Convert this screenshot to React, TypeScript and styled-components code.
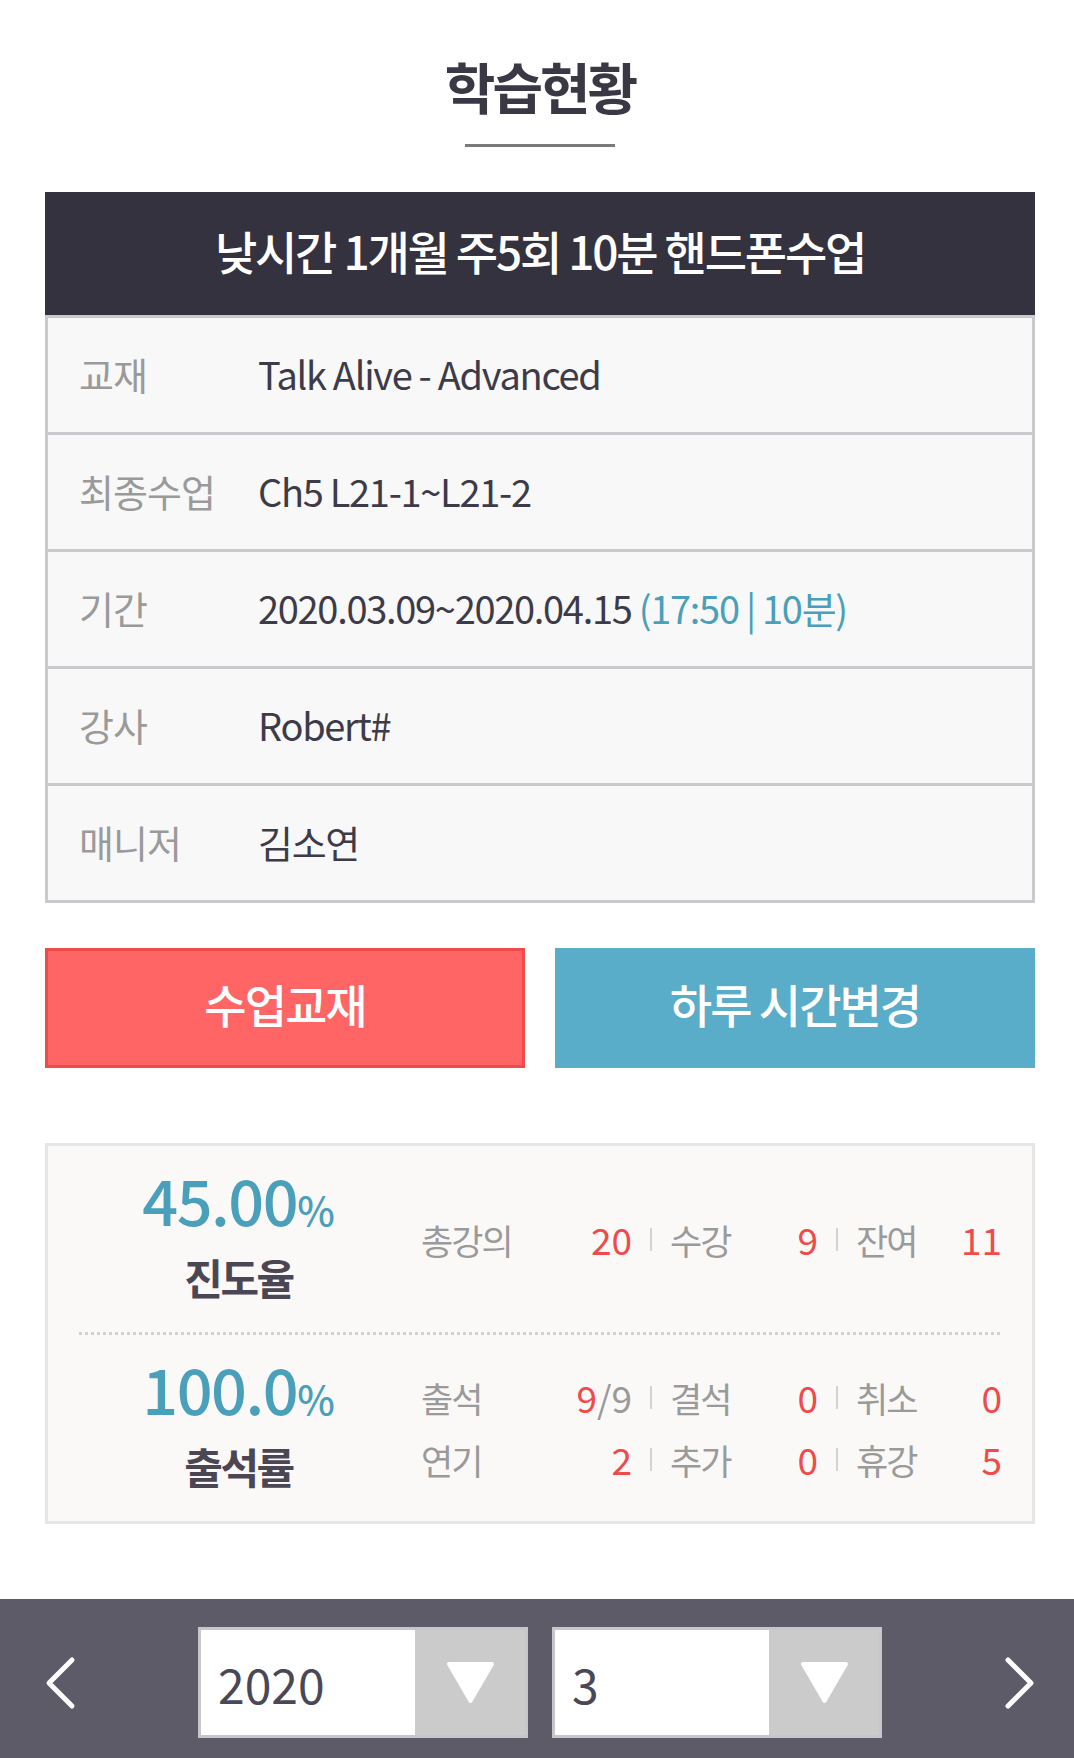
import React from 'react';
import styled, { createGlobalStyle } from 'styled-components';

const GlobalStyle = createGlobalStyle`
  html, body {
    margin: 0;
    padding: 0;
    background: #ffffff;
  }
  body {
    font-family: "Noto Sans CJK KR", "Noto Sans", sans-serif;
    color: #3d3b48;
  }
  * {
    box-sizing: border-box;
  }
`;

const Page = styled.div`
  width: 1074px;
  min-height: 1758px;
  display: flex;
  flex-direction: column;
`;

const Content = styled.main`
  padding: 0 39px 0 45px;
  display: flex;
  flex-direction: column;
`;

const TitleWrap = styled.header`
  padding-top: 54px;
  display: flex;
  flex-direction: column;
  align-items: center;
`;

const Title = styled.h1`
  margin: 0;
  font-size: 55px;
  line-height: 62px;
  font-weight: 700;
  letter-spacing: -3px;
  color: #3a3845;
`;

const TitleBar = styled.span`
  display: block;
  width: 150px;
  height: 3px;
  margin-top: 28px;
  background: #7a7a7a;
`;

const CourseHead = styled.div`
  margin-top: 45px;
  height: 123px;
  padding-bottom: 8px;
  background: #34323f;
  color: #ffffff;
  display: flex;
  align-items: center;
  justify-content: center;
  font-size: 46px;
  font-weight: 500;
  letter-spacing: -2.2px;
`;

const InfoTable = styled.dl`
  margin: 0;
  border-top: 3px solid #c9c9ce;
`;

const InfoRow = styled.div`
  height: 117px;
  display: flex;
  align-items: center;
  background: #f8f8f8;
  border: 3px solid #c9c9ce;
  border-top: none;
  padding-left: 31px;
  padding-bottom: 3px;
`;

const InfoLabel = styled.dt`
  width: 179px;
  flex-shrink: 0;
  font-size: 38px;
  letter-spacing: -1px;
  color: #9a9a9a;
`;

const InfoValue = styled.dd`
  margin: 0;
  font-size: 38px;
  letter-spacing: -1.3px;
  color: #3d3b48;
`;

const Accent = styled.span`
  color: #4a9fba;
`;

const ButtonRow = styled.div`
  margin-top: 45px;
  display: grid;
  grid-template-columns: 1fr 1fr;
  column-gap: 30px;
`;

const ActionButton = styled.button<{ $tone: 'red' | 'blue' }>`
  height: 120px;
  border: 3px solid ${p => (p.$tone === 'red' ? '#f04b4b' : '#5aadc9')};
  background: ${p => (p.$tone === 'red' ? '#ff6565' : '#5aadc9')};
  color: #ffffff;
  font-family: inherit;
  font-size: 46px;
  font-weight: 500;
  letter-spacing: -2px;
  cursor: pointer;
  padding: 0 0 10px;
`;

const StatsBox = styled.section`
  margin-top: 75px;
  border: 3px solid #e6e6e6;
  background: #faf9f8;
`;

const StatSection = styled.div`
  height: 186px;
  display: flex;
  align-items: center;
`;

const Divider = styled.div`
  margin: 0 31px;
  height: 3px;
  background: repeating-linear-gradient(
    to right,
    #d0d0d8 0,
    #d0d0d8 3px,
    transparent 3px,
    transparent 6px
  );
`;

const BigCol = styled.div`
  width: 373px;
  flex-shrink: 0;
  padding-left: 8px;
  padding-bottom: 12px;
  display: flex;
  flex-direction: column;
  align-items: center;
`;

const BigNumber = styled.div`
  font-size: 63px;
  line-height: 70px;
  letter-spacing: -1.5px;
  color: #4a9fba;
  font-weight: 500;
`;

const Percent = styled.span`
  font-size: 40px;
  letter-spacing: 0;
`;

const BigLabel = styled.div`
  margin-top: 8px;
  font-size: 42px;
  line-height: 50px;
  font-weight: 700;
  letter-spacing: -2.5px;
  color: #4a4654;
`;

const StatGrid = styled.div`
  display: grid;
  grid-template-columns: 211px 2px 148px 2px 146px;
  column-gap: 18px;
  align-items: center;
`;

const StatCell = styled.div`
  height: 62px;
  display: flex;
  align-items: center;
  justify-content: space-between;
`;

const StatName = styled.span`
  font-size: 35px;
  letter-spacing: -2px;
  color: #9a9a9a;
`;

const StatNum = styled.span`
  font-size: 37px;
  color: #f04b4b;
`;

const StatTotal = styled.span`
  color: #9a9a9a;
`;

const Sep = styled.span`
  width: 2px;
  height: 23px;
  background: #d2d2d8;
`;

const Footer = styled.footer`
  margin-top: 75px;
  height: 161px;
  background: #5c5b67;
  padding: 28px 39px 22px 45px;
  display: flex;
  align-items: center;
  justify-content: space-between;
`;

const NavArrow = styled.button`
  width: 31px;
  height: 54px;
  padding: 0;
  border: none;
  background: transparent;
  cursor: pointer;
  display: flex;
`;

const Pickers = styled.div`
  display: flex;
  gap: 24px;
`;

const Picker = styled.div`
  width: 330px;
  height: 111px;
  border: 3px solid #c6c6cc;
  background: #ffffff;
  display: flex;
`;

const PickerValue = styled.span`
  flex: 1;
  display: flex;
  align-items: center;
  padding-left: 17px;
  font-size: 48px;
  color: #4a4856;
`;

const PickerArrow = styled.span`
  width: 110px;
  background: #cbcbcb;
  display: flex;
  align-items: center;
  justify-content: center;
`;

const Chevron = ({ dir }: { dir: 'left' | 'right' }) => (
  <svg width="31" height="54" viewBox="0 0 31 54">
    <path
      d={dir === 'left' ? 'M27 4 L4 27 L27 50' : 'M4 4 L27 27 L4 50'}
      fill="none"
      stroke="#ffffff"
      strokeWidth="5"
      strokeLinecap="round"
      strokeLinejoin="round"
    />
  </svg>
);

const DownTriangle = () => (
  <svg width="51" height="43" viewBox="0 0 51 43">
    <path
      d="M4 3 L47 3 L25.5 40 Z"
      fill="#ffffff"
      stroke="#ffffff"
      strokeWidth="4"
      strokeLinejoin="round"
    />
  </svg>
);

const infoRows = [
  { label: '교재', value: 'Talk Alive - Advanced' },
  { label: '최종수업', value: 'Ch5 L21-1~L21-2' },
  { label: '기간', value: '2020.03.09~2020.04.15', extra: '(17:50 | 10분)' },
  { label: '강사', value: 'Robert#' },
  { label: '매니저', value: '김소연' },
];

type Stat = { name: string; num: string; total?: string };

const StatRow = ({ items }: { items: Stat[] }) => (
  <>
    {items.map((s, i) => (
      <React.Fragment key={s.name}>
        {i > 0 && <Sep />}
        <StatCell>
          <StatName>{s.name}</StatName>
          <StatNum>
            {s.num}
            {s.total && <StatTotal>{s.total}</StatTotal>}
          </StatNum>
        </StatCell>
      </React.Fragment>
    ))}
  </>
);

export default function App() {
  return (
    <Page>
      <GlobalStyle />
      <Content>
        <TitleWrap>
          <Title>학습현황</Title>
          <TitleBar />
        </TitleWrap>

        <CourseHead>낮시간 1개월 주5회 10분 핸드폰수업</CourseHead>

        <InfoTable>
          {infoRows.map(row => (
            <InfoRow key={row.label}>
              <InfoLabel>{row.label}</InfoLabel>
              <InfoValue>
                {row.value}
                {row.extra && <Accent> {row.extra}</Accent>}
              </InfoValue>
            </InfoRow>
          ))}
        </InfoTable>

        <ButtonRow>
          <ActionButton $tone="red">수업교재</ActionButton>
          <ActionButton $tone="blue">하루 시간변경</ActionButton>
        </ButtonRow>

        <StatsBox>
          <StatSection>
            <BigCol>
              <BigNumber>
                45.00<Percent>%</Percent>
              </BigNumber>
              <BigLabel>진도율</BigLabel>
            </BigCol>
            <StatGrid>
              <StatRow
                items={[
                  { name: '총강의', num: '20' },
                  { name: '수강', num: '9' },
                  { name: '잔여', num: '11' },
                ]}
              />
            </StatGrid>
          </StatSection>
          <Divider />
          <StatSection>
            <BigCol>
              <BigNumber>
                100.0<Percent>%</Percent>
              </BigNumber>
              <BigLabel>출석률</BigLabel>
            </BigCol>
            <StatGrid>
              <StatRow
                items={[
                  { name: '출석', num: '9', total: '/9' },
                  { name: '결석', num: '0' },
                  { name: '취소', num: '0' },
                ]}
              />
              <StatRow
                items={[
                  { name: '연기', num: '2' },
                  { name: '추가', num: '0' },
                  { name: '휴강', num: '5' },
                ]}
              />
            </StatGrid>
          </StatSection>
        </StatsBox>
      </Content>

      <Footer>
        <NavArrow aria-label="이전 달">
          <Chevron dir="left" />
        </NavArrow>
        <Pickers>
          <Picker>
            <PickerValue>2020</PickerValue>
            <PickerArrow>
              <DownTriangle />
            </PickerArrow>
          </Picker>
          <Picker>
            <PickerValue>3</PickerValue>
            <PickerArrow>
              <DownTriangle />
            </PickerArrow>
          </Picker>
        </Pickers>
        <NavArrow aria-label="다음 달">
          <Chevron dir="right" />
        </NavArrow>
      </Footer>
    </Page>
  );
}
